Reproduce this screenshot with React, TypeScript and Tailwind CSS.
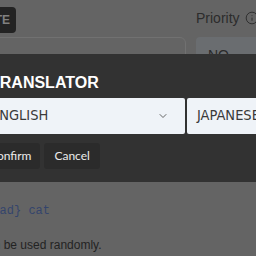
import { ChevronDown, Info } from "lucide-react"

const sans = { fontFamily: '"Liberation Sans", Arial, sans-serif' }

export default function App() {
  return (
    <div className="relative w-[256px] h-[256px] overflow-hidden bg-[#646464]" style={sans}>
      {/* page behind the dialog */}
      <div className="-ml-[20px] w-[320px] pt-[7px]">
        <div className="grid grid-cols-[206px_1fr] gap-x-[10px]">
          <div>
            <button className="h-[26px] w-[36px] rounded-[4px] bg-[#232323] pr-[6px] text-right text-[12px] font-bold text-[#808080]">
              TE
            </button>
          </div>
          <div className="flex items-center gap-[4px] text-[14px] leading-[20px] text-[#2c2c2c] -mt-[4px]">
            Priority
            <Info className="ml-[1px] h-[14px] w-[14px]" strokeWidth={1.6} />
          </div>
        </div>
        <div className="mt-[4px] grid grid-cols-[206px_1fr] gap-x-[10px]">
          <div className="h-[36px] rounded-[6px] border border-[#717171]" />
          <div className="h-[36px] rounded-[4px] bg-[#6a6d70] pl-[12px] pt-[8px] text-[14px] text-[#2a2a2a]">
            NO
          </div>
        </div>
        <div className="h-[130px]" />
        <div
          className="-ml-[2px] text-[12px] leading-[16px] text-[#34446c]"
          style={{ fontFamily: '"Liberation Mono", "Courier New", monospace' }}
        >
          {"{load} cat"}
        </div>
        <p className="mt-[17px] ml-[1px] text-[12px] leading-[18px] text-[#232323]">
          can be used randomly.
        </p>
      </div>

      {/* translator dialog */}
      <div className="absolute left-[-40px] top-[54px] w-[360px] bg-[#323232] px-[20px] pt-[17px] pb-[13px]">
        <h2 className="ml-[10px] text-[16px] font-bold leading-[24px] text-white">TRANSLATOR</h2>
        <div className="mt-[3px] grid grid-cols-[205px_1fr] gap-[2px]">
          <div
            className="flex h-[36px] items-center justify-between rounded-[2px] bg-[#eff3f8] pl-[11px] pr-[16px] text-[14.5px] text-[#3a3a3a]"
            style={{ fontFamily: '"DejaVu Sans", sans-serif', fontStretch: "condensed" }}
          >
            ENGLISH
            <ChevronDown className="h-[12px] w-[12px] text-[#555]" strokeWidth={1.8} />
          </div>
          <div
            className="flex h-[36px] items-center rounded-[2px] bg-[#eff3f8] pl-[10px] text-[14.5px] text-[#3a3a3a]"
            style={{ fontFamily: '"DejaVu Sans", sans-serif', fontStretch: "condensed" }}
          >
            JAPANESE
          </div>
        </div>
        <div className="mt-[9px] flex gap-[4px]" style={{ fontFamily: "Lato, sans-serif" }}>
          <button className="h-[26px] rounded-[3px] bg-[#2b2b2b] px-[9px] text-[12px] text-[#ececec]">
            Confirm
          </button>
          <button className="h-[26px] rounded-[3px] bg-[#2b2b2b] px-[10px] text-[12px] text-[#ececec]">
            Cancel
          </button>
        </div>
      </div>
    </div>
  )
}
